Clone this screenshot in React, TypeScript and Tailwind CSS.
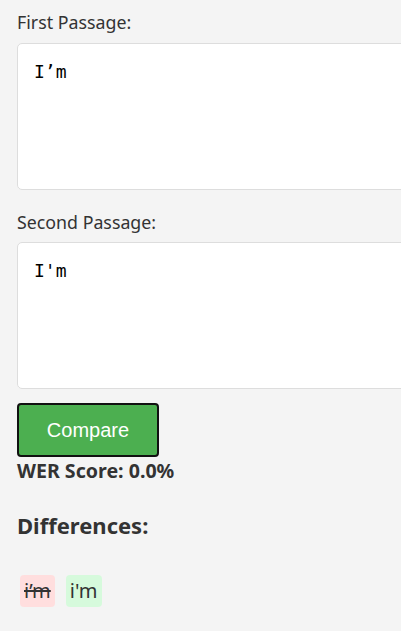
export default function App() {
  const sans = { fontFamily: '"Noto Sans", "Open Sans", sans-serif' };
  return (
    <div className="min-h-[631px] w-[401px] overflow-hidden bg-[#f4f4f4] pl-[17px] pt-[9px] text-[#333]" style={sans}>
      <label className="block text-[17.8px] leading-[26px]">First Passage:</label>
      <textarea
        readOnly
        defaultValue="I’m"
        className="mt-[8px] block h-[147px] w-[420px] resize-none rounded-[5px] border border-[#ddd] bg-white px-[16px] py-[16px] font-['DejaVu_Sans_Mono',monospace] text-[18px] leading-[24px] text-black outline-none"
      />
      <label className="mt-[19px] block text-[17.8px] leading-[26px]">Second Passage:</label>
      <textarea
        readOnly
        defaultValue="I'm"
        className="mt-[7px] block h-[147px] w-[420px] resize-none rounded-[5px] border border-[#ddd] bg-white px-[16px] py-[16px] font-['DejaVu_Sans_Mono',monospace] text-[18px] leading-[24px] text-black outline-none"
      />
      <button className="mt-[14px] block h-[54px] w-[142px] rounded-[4px] border-2 border-[#111] bg-[#4caf50] font-['Liberation_Sans',Arial,sans-serif] text-[20px] text-white">
        Compare
      </button>
      <p className="mt-[1px] text-[19.6px] font-bold leading-[26px]">WER Score: 0.0%</p>
      <h3 className="mt-[26px] text-[22px] font-bold leading-[30px]">Differences:</h3>
      <div className="mt-[35px] flex gap-[11px] pl-[3px] text-[20px]">
        <span className="rounded-[4px] bg-[#ffdede] px-[4px] py-[2px] leading-[28px] line-through">i’m</span>
        <span className="rounded-[4px] bg-[#d6fadc] px-[4px] py-[2px] leading-[28px]">i'm</span>
      </div>
    </div>
  );
}
